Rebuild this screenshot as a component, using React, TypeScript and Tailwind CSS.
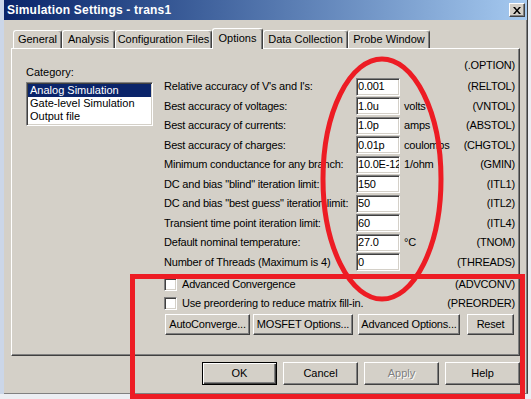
import React from "react";

const rows: [string, string, string, string][] = [
  ["Relative accuracy of V's and I's:", "0.001", "", "(RELTOL)"],
  ["Best accuracy of voltages:", "1.0u", "volts", "(VNTOL)"],
  ["Best accuracy of currents:", "1.0p", "amps", "(ABSTOL)"],
  ["Best accuracy of charges:", "0.01p", "coulombs", "(CHGTOL)"],
  ["Minimum conductance for any branch:", "10.0E-12", "1/ohm", "(GMIN)"],
  ['DC and bias "blind" iteration limit:', "150", "", "(ITL1)"],
  ['DC and bias "best guess" iteration limit:', "50", "", "(ITL2)"],
  ["Transient time point iteration limit:", "60", "", "(ITL4)"],
  ["Default nominal temperature:", "27.0", "°C", "(TNOM)"],
  ["Number of Threads (Maximum is 4)", "0", "", "(THREADS)"],
];

const raised =
  "border border-t-white border-l-white border-r-[#404040] border-b-[#404040] shadow-[inset_-1px_-1px_0_#808080]";
const sunken =
  "border border-t-[#808080] border-l-[#808080] border-r-white border-b-white shadow-[inset_1px_1px_0_#404040,inset_-1px_-1px_0_#d4d0c8]";

function Tab({ label, w, selected }: { label: string; w: string; selected?: boolean }) {
  if (selected) {
    return (
      <div
        className={`${w} h-[21px] -mb-px relative z-10 bg-[#d4d0c8] border-t border-l border-white border-r border-r-[#404040] rounded-t-[3px] shadow-[inset_-1px_0_0_#808080] flex items-start justify-center pt-[3px] whitespace-nowrap`}
      >
        {label}
      </div>
    );
  }
  return (
    <div
      className={`${w} h-[18px] border-t border-l border-white border-r border-r-[#404040] rounded-t-[3px] shadow-[inset_-1px_0_0_#808080] flex items-center justify-center whitespace-nowrap`}
    >
      {label}
    </div>
  );
}

function Btn({ label, cls, disabled, def }: { label: string; cls: string; disabled?: boolean; def?: boolean }) {
  const bevel = def
    ? "border border-black shadow-[inset_1px_1px_0_#fff,inset_-1px_-1px_0_#404040,inset_-2px_-2px_0_#808080]"
    : raised;
  return (
    <div className={`${cls} ${bevel} bg-[#d4d0c8] flex items-center justify-center whitespace-nowrap`}>
      <span className={disabled ? "text-[#808080] [text-shadow:1px_1px_0_#fff]" : ""}>{label}</span>
    </div>
  );
}

export default function App() {
  return (
    <div className="relative w-[531px] h-[399px] overflow-hidden bg-[#eceef3] font-['Liberation_Sans',Arial,sans-serif] text-[11px] leading-[13px] text-black">
      <div className="flex h-[394px]">
        <div className="w-[4px] bg-[#cbd6e8]" />
        <div className="w-[524px] h-[394px] flex flex-col bg-[#d4d0c8] border-r border-b border-r-[#404040] border-b-[#808080] shadow-[inset_-1px_0_0_#808080]">
          {/* Title bar */}
          <div className="h-[20px] flex items-center justify-between pl-[3px] pr-[2px] bg-linear-to-r from-[#0a246a] to-[#a6caf0]">
            <span className="text-white font-bold text-[12px] leading-[14px] tracking-[0.2px]">
              Simulation Settings - trans1
            </span>
            <div className={`w-[16px] h-[14px] bg-[#d4d0c8] ${raised} flex items-center justify-center`}>
              <svg width="8" height="7" viewBox="0 0 8 7">
                <path d="M0 0h2l2 2.5L6 0h2L5 3.5 8 7H6L4 4.5 2 7H0l3-3.5z" fill="#000" />
              </svg>
            </div>
          </div>

          {/* Tabs */}
          <div className="mt-[8px] ml-[9px] flex items-end h-[20px]">
            <Tab label="General" w="w-[49px]" />
            <Tab label="Analysis" w="w-[53px]" />
            <Tab label="Configuration Files" w="w-[97px]" />
            <Tab label="Options" w="w-[51px]" selected />
            <Tab label="Data Collection" w="w-[85px]" />
            <Tab label="Probe Window" w="w-[82px]" />
          </div>

          {/* Panel */}
          <div className="ml-[7px] w-[509px] h-[308px] border border-t-white border-l-white border-r-[#404040] border-b-[#404040] shadow-[inset_-1px_-1px_0_#808080] flex">
            {/* Left column */}
            <div className="w-[141px] pl-[14px] pt-[17px] shrink-0">
              <div className="h-[13px]">Category:</div>
              <div className={`mt-[3px] w-[127px] h-[44px] bg-white ${sunken} p-[1px]`}>
                <div className="h-[13px] bg-[#0a246a] text-white pl-[2px]">Analog Simulation</div>
                <div className="h-[13px] pl-[2px]">Gate-level Simulation</div>
                <div className="h-[13px] pl-[2px]">Output file</div>
              </div>
            </div>

            {/* Right column */}
            <div className="ml-[11px] w-[351px] pt-[10px] shrink-0 tracking-[-0.2px]">
              <div className="h-[13px] text-right">(.OPTION)</div>
              <div className="mt-[5px]">
                {rows.map(([label, val, unit, code]) => (
                  <div key={code} className="flex items-center h-[19.5px]">
                    <div className="w-[192px] shrink-0 whitespace-nowrap">{label}</div>
                    <div
                      className={`w-[44px] h-[18px] shrink-0 bg-white ${sunken} pl-[1px] flex items-center overflow-hidden whitespace-nowrap relative z-[1]`}
                    >
                      {val}
                    </div>
                    <div className="ml-[4px] flex-1 whitespace-nowrap">{unit}</div>
                    <div className="text-right whitespace-nowrap">{code}</div>
                  </div>
                ))}
              </div>

              <div className="mt-[3px]">
                <div className="flex items-center h-[19px]">
                  <div className={`w-[13px] h-[13px] bg-white ${sunken}`} />
                  <div className="ml-[5px] flex-1">Advanced Convergence</div>
                  <div>(ADVCONV)</div>
                </div>
                <div className="flex items-center h-[19px]">
                  <div className={`w-[13px] h-[13px] bg-white ${sunken}`} />
                  <div className="ml-[5px] flex-1">Use preordering to reduce matrix fill-in.</div>
                  <div>(PREORDER)</div>
                </div>
              </div>

              <div className="mt-[1px] flex h-[21px]">
                <Btn label="AutoConverge..." cls="ml-[1px] w-[85px] h-[21px]" />
                <Btn label="MOSFET Options..." cls="ml-[3px] w-[100px] h-[21px]" />
                <Btn label="Advanced Options..." cls="ml-[5px] w-[102px] h-[21px]" />
                <Btn label="Reset" cls="ml-[7px] w-[47px] h-[21px]" />
              </div>
            </div>
          </div>

          {/* Bottom buttons */}
          <div className="mt-[6px] flex justify-end pr-[7px] gap-[6px]">
            <Btn label="OK" cls="w-[75px] h-[23px]" def />
            <Btn label="Cancel" cls="w-[75px] h-[23px]" />
            <Btn label="Apply" cls="w-[75px] h-[23px]" disabled />
            <Btn label="Help" cls="w-[75px] h-[23px]" />
          </div>
        </div>
      </div>

      {/* Red annotations */}
      <svg className="absolute left-0 top-0 pointer-events-none" width="531" height="399">
        <ellipse cx="382" cy="179" rx="59" ry="120" fill="none" stroke="#ed1c24" strokeWidth="5" />
      </svg>
      <div className="absolute left-[130px] top-[274px] w-[395px] h-[125px] border-[5px] border-[#ed1c24] pointer-events-none" />
    </div>
  );
}
